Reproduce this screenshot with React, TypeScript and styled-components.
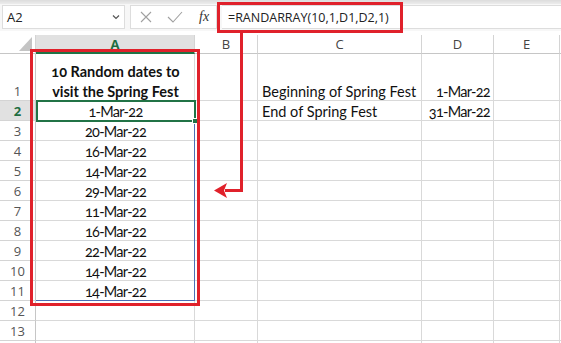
import React from "react";
import styled, { createGlobalStyle } from "styled-components";

const Global = createGlobalStyle`
  html, body { margin: 0; padding: 0; background: #ffffff; overflow: hidden; }
  * { box-sizing: border-box; }
`;

const Page = styled.div`
  position: relative;
  width: 561px;
  height: 343px;
  overflow: hidden;
  background: #ffffff;
  display: flex;
  flex-direction: column;
  font-family: "Open Sans", "Noto Sans", sans-serif;
`;

const TopStrip = styled.div`
  height: 4px;
  background: linear-gradient(#dcdcdc, #ececec);
  flex: none;
`;

const FormulaBar = styled.div`
  display: flex;
  align-items: stretch;
  height: 27px;
  padding: 1px 0 2px 2px;
  gap: 5px;
  background: #f7f7f7;
  flex: none;
`;

const NameBox = styled.div`
  width: 123px;
  display: flex;
  align-items: center;
  justify-content: space-between;
  padding: 0 4px 0 4px;
  background: #ffffff;
  border: 1px solid #dddddd;
  font-size: 13px;
  color: #222;
`;

const FxBox = styled.div`
  width: 87px;
  display: flex;
  align-items: center;
  padding-left: 8px;
  gap: 14px;
  background: #ffffff;
  border: 1px solid #dddddd;
`;

const Fx = styled.span`
  font-family: "Liberation Serif", serif;
  font-style: italic;
  font-size: 14px;
  color: #333;
  margin-left: 2px;
`;

const FormulaInput = styled.div`
  flex: 1;
  display: flex;
  align-items: center;
  padding-left: 6px;
  background: #ffffff;
  border-top: 1px solid #dddddd;
  border-bottom: 1px solid #dddddd;
  font-size: 12.5px;
  color: #222;
`;

const Spacer = styled.div`
  height: 4px;
  background: #ffffff;
  flex: none;
`;

const Sheet = styled.div`
  display: grid;
  grid-template-columns: 36px 159px 63px 164px 72px 66px 1fr;
  grid-template-rows: 19px 47px repeat(13, 20px);
  flex: none;
`;

const Corner = styled.div`
  position: relative;
  border-right: 1px solid #d4d4d4;
  border-bottom: 1px solid #c6c6c6;
  background: #ffffff;
`;

const CornerTriangle = styled.div`
  position: absolute;
  right: 3px;
  bottom: 2px;
  width: 0;
  height: 0;
  border-left: 13px solid transparent;
  border-bottom: 14px solid #c4c4c4;
`;

const ColHeader = styled.div<{ $sel?: boolean }>`
  display: flex;
  align-items: center;
  justify-content: center;
  font-size: 13px;
  color: ${(p) => (p.$sel ? "#1e6e42" : "#444")};
  font-weight: ${(p) => (p.$sel ? 700 : 400)};
  background: ${(p) => (p.$sel ? "#e1e1e1" : "#ffffff")};
  border-right: 1px solid #d4d4d4;
  border-bottom: ${(p) => (p.$sel ? "2px solid #217346" : "1px solid #c6c6c6")};
`;

const RowHeader = styled.div<{ $sel?: boolean }>`
  display: flex;
  align-items: flex-end;
  justify-content: center;
  font-size: 13px;
  line-height: 17px;
  color: ${(p) => (p.$sel ? "#1e6e42" : "#555")};
  font-weight: ${(p) => (p.$sel ? 700 : 400)};
  background: ${(p) => (p.$sel ? "#e1e1e1" : "#ffffff")};
  border-right: 1px solid #c6c6c6;
  border-bottom: 1px solid #d4d4d4;
`;

const Cell = styled.div<{ $align?: "left" | "center" | "right"; $bold?: boolean }>`
  display: flex;
  flex-direction: column;
  justify-content: flex-end;
  align-items: ${(p) =>
    p.$align === "center" ? "center" : p.$align === "right" ? "flex-end" : "flex-start"};
  text-align: ${(p) => p.$align || "left"};
  padding: 0 3px 0 4px;
  font-family: "Lato", "Open Sans", sans-serif;
  font-size: 14.5px;
  line-height: 20px;
  font-weight: ${(p) => (p.$bold ? 700 : 400)};
  font-feature-settings: "onum";
  color: #111;
  white-space: nowrap;
  border-right: 1px solid #d9d9d9;
  border-bottom: 1px solid #d9d9d9;
`;

const CellText = styled.span<{ $date?: boolean }>`
  position: relative;
  top: 2px;
  display: flex;
  flex-direction: column;
  align-items: inherit;
  letter-spacing: ${(p) => (p.$date ? "-0.7px" : "0")};
`;

const RedBox = styled.div`
  position: absolute;
  border: 3px solid #e0212b;
  pointer-events: none;
`;

const Selection = styled.div`
  position: absolute;
  left: 36px;
  top: 100px;
  width: 160px;
  height: 22px;
  border: 2px solid #217346;
`;

const FillHandle = styled.div`
  position: absolute;
  right: -4px;
  bottom: -4px;
  width: 6px;
  height: 6px;
  background: #217346;
  border: 1px solid #ffffff;
`;

const Spill = styled.div`
  position: absolute;
  left: 36px;
  top: 101px;
  width: 159px;
  height: 200px;
  border-right: 1px solid #4a6fb5;
  border-bottom: 1px solid #4a6fb5;
`;

const Arrow = styled.svg`
  position: absolute;
  left: 0;
  top: 0;
  pointer-events: none;
`;

const cols = ["A", "B", "C", "D", "E", ""];
const dates = [
  "1-Mar-22",
  "20-Mar-22",
  "16-Mar-22",
  "14-Mar-22",
  "29-Mar-22",
  "11-Mar-22",
  "16-Mar-22",
  "22-Mar-22",
  "14-Mar-22",
  "14-Mar-22",
];

type RowData = { a?: React.ReactNode; c?: string; d?: string; boldA?: boolean };

const rows: RowData[] = [
  {
    a: (
      <>
        <span>10 Random dates to</span>
        <span>visit the Spring Fest</span>
      </>
    ),
    boldA: true,
    c: "Beginning of Spring Fest",
    d: "1-Mar-22",
  },
  ...dates.map((d, i) => ({
    a: d,
    c: i === 0 ? "End of Spring Fest" : undefined,
    d: i === 0 ? "31-Mar-22" : undefined,
  })),
  {},
  {},
  {},
];

export default function App() {
  return (
    <Page>
      <Global />
      <TopStrip />
      <FormulaBar>
        <NameBox>
          <span>A2</span>
          <svg width="8" height="6" viewBox="0 0 8 6">
            <path d="M1 1.5 L4 4.5 L7 1.5" fill="none" stroke="#555" strokeWidth="1.2" />
          </svg>
        </NameBox>
        <FxBox>
          <svg width="14" height="14" viewBox="0 0 14 14">
            <path d="M2 2 L12 12 M12 2 L2 12" stroke="#a0a0a0" strokeWidth="1.1" fill="none" />
          </svg>
          <svg width="16" height="14" viewBox="0 0 16 14">
            <path d="M1 7 L6 12 L15 2" stroke="#a0a0a0" strokeWidth="1.1" fill="none" />
          </svg>
          <Fx>fx</Fx>
        </FxBox>
        <FormulaInput>=RANDARRAY(10,1,D1,D2,1)</FormulaInput>
      </FormulaBar>
      <Spacer />
      <Sheet>
        <Corner>
          <CornerTriangle />
        </Corner>
        {cols.map((c) => (
          <ColHeader key={c || "f"} $sel={c === "A"}>
            {c}
          </ColHeader>
        ))}
        {rows.map((r, i) => (
          <React.Fragment key={i}>
            <RowHeader $sel={i === 1}>{i < 13 ? i + 1 : ""}</RowHeader>
            <Cell $align="center" $bold={r.boldA}>
              {r.a && <CellText $date={!r.boldA}>{r.a}</CellText>}
            </Cell>
            <Cell />
            <Cell>{r.c && <CellText>{r.c}</CellText>}</Cell>
            <Cell $align="right">{r.d && <CellText $date>{r.d}</CellText>}</Cell>
            <Cell />
            <Cell />
          </React.Fragment>
        ))}
      </Sheet>

      <Spill />
      <Selection>
        <FillHandle />
      </Selection>
      <RedBox style={{ left: 30, top: 49, width: 170, height: 257 }} />
      <RedBox style={{ left: 217, top: 2, width: 186, height: 31 }} />
      <Arrow width="561" height="343" viewBox="0 0 561 343">
        <path
          d="M241.5 33 L241.5 190.5 L225 190.5"
          fill="none"
          stroke="#e0212b"
          strokeWidth="3"
        />
        <path d="M214 190.5 L227 183 L224 190.5 L227 198 Z" fill="#e0212b" />
      </Arrow>
    </Page>
  );
}
